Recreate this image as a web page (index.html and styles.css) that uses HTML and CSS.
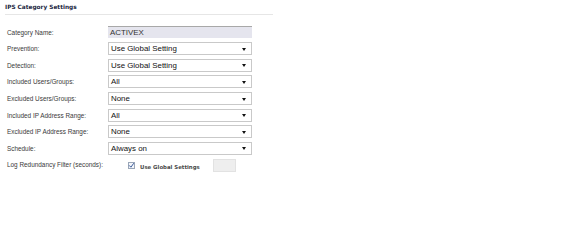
FILE: index.html
```html
<!DOCTYPE html>
<html>
<head>
<meta charset="utf-8">
<link rel="stylesheet" href="styles.css">
</head>
<body>
<div class="panel">
  <div class="title">IPS Category Settings</div>
  <div class="form">
    <div class="label">Category Name:</div>
    <div class="readonly">ACTIVEX</div>

    <div class="label">Prevention:</div>
    <div class="select">Use Global Setting<span class="arrow"></span></div>

    <div class="label">Detection:</div>
    <div class="select">Use Global Setting<span class="arrow"></span></div>

    <div class="label">Included Users/Groups:</div>
    <div class="select">All<span class="arrow"></span></div>

    <div class="label">Excluded Users/Groups:</div>
    <div class="select">None<span class="arrow"></span></div>

    <div class="label">Included IP Address Range:</div>
    <div class="select">All<span class="arrow"></span></div>

    <div class="label">Excluded IP Address Range:</div>
    <div class="select">None<span class="arrow"></span></div>

    <div class="label">Schedule:</div>
    <div class="select">Always on<span class="arrow"></span></div>

    <div class="label">Log Redundancy Filter (seconds):</div>
    <div class="logctl">
      <span class="check"><svg width="7" height="7" viewBox="0 0 7 7"><path d="M1.2 3.4 L2.9 5.2 L5.8 1.2" fill="none" stroke="#3a5a9a" stroke-width="1"/></svg></span>
      <span class="checklabel">Use Global Settings</span>
      <span class="smallbox"></span>
    </div>
  </div>
</div>
</body>
</html>
```
FILE: styles.css
```css
html, body {
  margin: 0;
  padding: 0;
  background: #ffffff;
}
body {
  width: 576px;
  height: 208px;
  overflow: hidden;
}
.panel {
  padding: 3px 0 0 5px;
  width: 268px;
}
.title {
  font-family: "DejaVu Sans", sans-serif;
  font-weight: bold;
  font-size: 5.8px;
  color: #1a2540;
  line-height: 8px;
  height: 8px;
  padding-bottom: 3px;
  border-bottom: 1px solid #e6e6e6;
}
.form {
  display: grid;
  grid-template-columns: 101px 144px;
  grid-auto-rows: 16.57px;
  align-items: center;
  padding-left: 2px;
  margin-top: 9px;
}
.label {
  font-family: "Liberation Sans", sans-serif;
  font-size: 6.4px;
  color: #3a3a3a;
}
.readonly {
  height: 12px;
  box-sizing: border-box;
  background: #e5e5ee;
  border-top: 1px solid #a8a8a8;
  font-family: "Liberation Sans", sans-serif;
  font-size: 7.9px;
  line-height: 11px;
  padding-left: 2px;
  color: #333333;
}
.select {
  position: relative;
  height: 13px;
  box-sizing: border-box;
  background: #ffffff;
  border: 1px solid #c9c9c9;
  font-family: "Liberation Sans", sans-serif;
  font-size: 7.9px;
  line-height: 11px;
  padding-left: 2px;
  color: #111111;
}
.arrow {
  position: absolute;
  right: 5px;
  top: 4.5px;
  width: 0;
  height: 0;
  border-left: 2.5px solid transparent;
  border-right: 2.5px solid transparent;
  border-top: 3px solid #111111;
}
.logctl {
  display: flex;
  align-items: center;
  padding-left: 20px;
  margin-top: 2px;
}
.check {
  width: 7px;
  height: 7px;
  box-sizing: border-box;
  border: 1px solid #9aa6b8;
  background: #f4f6fa;
  position: relative;
}
.check svg {
  position: absolute;
  left: -1px;
  top: -1px;
}
.checklabel {
  font-family: "DejaVu Sans", sans-serif;
  font-weight: bold;
  font-size: 5.4px;
  color: #4a4a4a;
  margin-left: 5px;
  margin-top: 2px;
}
.smallbox {
  width: 23px;
  height: 13px;
  background: #eeeeee;
  border: 1px solid #e2e2e2;
  box-sizing: border-box;
  margin-left: 13px;
}
```
